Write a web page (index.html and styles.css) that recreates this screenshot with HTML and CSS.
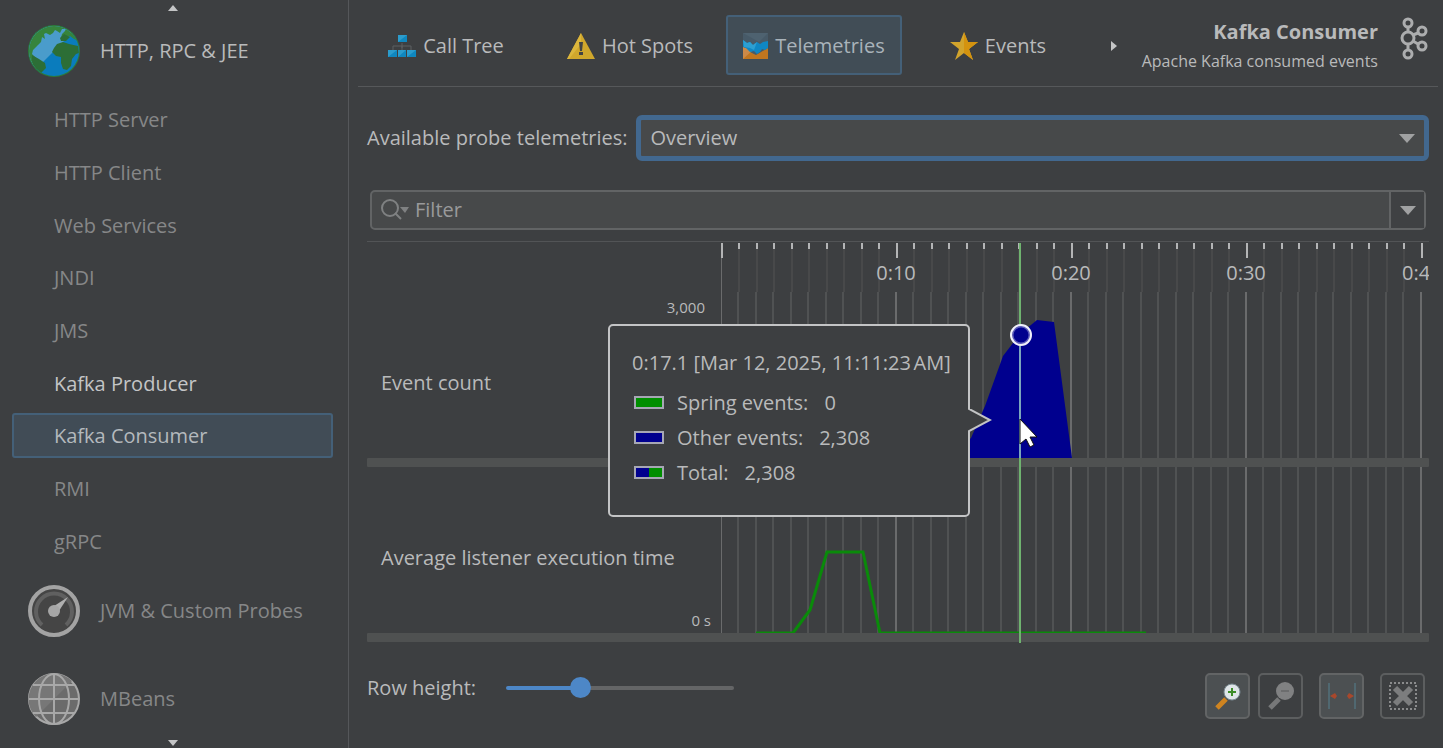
FILE: index.html
```html
<!DOCTYPE html>
<html lang="en">
<head>
    <meta charset="UTF-8" />
    <meta name="viewport" content="width=device-width, initial-scale=1.0" />
    <title>Kafka Consumer - Telemetries</title>
    <link rel="stylesheet" href="styles.css">
</head>
<body>
    <aside class="sidebar">
        <button class="scroll-button" aria-label="Scroll up">
            <svg width="12" height="6" viewBox="0 0 12 6"><path d="M1 6L6 0l5 6z" fill="#c4c5c6"/></svg>
        </button>

        <a href="#" class="category open">
            <svg width="54" height="54" viewBox="0 0 54 54">
                <defs>
                    <clipPath id="earthClip"><circle cx="27" cy="27" r="25"/></clipPath>
                </defs>
                <circle cx="27" cy="27" r="26" fill="#2b7d3b"/>
                <g clip-path="url(#earthClip)">
                    <rect width="54" height="54" fill="#0a7cbd"/>
                    <path d="M0 0h54L0 54z" fill="#4a9ccb"/>
                    <path d="M0 24V0h40l4 4-6 1-3 0-2 4-3-2-2-1-2 3-3 2-4-2-2 1 1 5-3-2-1 5-3 3-5 5-1 4 5 5 5 4-6 7C4 38 1 32 0 24z" fill="#36843c"/>
                    <path d="M5 31l7 4 6 4 1 5-4 4-1 5C8 48 4 40 5 31z" fill="#2c6e36"/>
                    <path d="M40 2l6 6 6 9-5-2-4-3-5 1-4 1 1-4 3-3z" fill="#36843c"/>
                    <path d="M27 24l3-4 6-2 6 2 9 2 1 7-3 1-4 5-1 7-4 4-4-1-2-6 0-6-5-1-4-4z" fill="#2c6e36"/>
                    <path d="M33 14l4-4 6 3-4 4-5 0z" fill="#2c6e36"/>
                </g>
            </svg>
            HTTP, RPC &amp; JEE
        </a>

        <ul class="probe-list">
            <li><a href="#">HTTP Server</a></li>
            <li><a href="#">HTTP Client</a></li>
            <li><a href="#">Web Services</a></li>
            <li><a href="#">JNDI</a></li>
            <li><a href="#">JMS</a></li>
            <li><a href="#" class="recorded">Kafka Producer</a></li>
            <li><a href="#" class="selected">Kafka Consumer</a></li>
            <li><a href="#">RMI</a></li>
            <li><a href="#">gRPC</a></li>
        </ul>

        <a href="#" class="category">
            <svg width="54" height="54" viewBox="0 0 54 54" fill="none">
                <circle cx="27" cy="27" r="24" fill="#454545" stroke="#a3a3a3" stroke-width="4"/>
                <path d="M15 41A18 18 0 1 1 39 41" stroke="#606060" stroke-width="4"/>
                <path d="M41 13L24 24l6 6z" fill="#b0b0b0"/>
                <circle cx="27" cy="27" r="6" fill="#a6a6a6"/>
            </svg>
            JVM &amp; Custom Probes
        </a>
        <a href="#" class="category">
            <svg width="54" height="54" viewBox="0 0 54 54" fill="none" stroke="#a8a8a8" stroke-width="2">
                <circle cx="27" cy="27" r="25" fill="#6b6b6b"/>
                <path d="M9 45A25 25 0 0 1 45 9z" fill="#777" stroke="none"/>
                <ellipse cx="27" cy="27" rx="15" ry="25"/>
                <path d="M27 2v50M2 27h50M6 13h42M6 41h42"/>
            </svg>
            MBeans
        </a>

        <button class="scroll-button bottom" aria-label="Scroll down">
            <svg width="12" height="6" viewBox="0 0 12 6"><path d="M1 0h10L6 6z" fill="#c4c5c6"/></svg>
        </button>
    </aside>

    <main>
        <header>
            <nav class="tabs">
                <button class="tab">
                    <svg width="28" height="28" viewBox="0 0 28 28">
                        <path d="M14 11v5M5 18v-4h18v4M14 14v4" fill="none" stroke="#5d6163"/>
                        <path d="M10 3h9v7h-9zM0 18h9v7H0zM10 18h8v7h-8zM19 18h9v7h-9z" fill="#0f87bf"/>
                        <path d="M10 3h9l-9 7zM0 18h9l-9 7zM10 18h8l-8 7zM19 18h9l-9 7z" fill="#2c9ccc"/>
                    </svg>
                    Call Tree
                </button>
                <button class="tab">
                    <svg width="28" height="28" viewBox="0 0 28 28">
                        <path d="M14 1l14 26H0z" fill="#d0a72c"/>
                        <path d="M14 1v11L2 27H0z" fill="#dcb63c"/>
                        <path d="M12 10h4l-1 9h-2zM12 20h4v3h-4z" fill="#424344"/>
                    </svg>
                    Hot Spots
                </button>
                <button class="tab selected">
                    <svg width="25" height="28" viewBox="1 0 25 28">
                        <rect x="1" y="1" width="25" height="26" fill="#475a68"/>
                        <path d="M1 1h25l-9 9z" fill="#4e6270"/>
                        <path d="M1 15l7 5 6 3 12-7v11H1z" fill="#c1761f"/>
                        <path d="M1 15l10 3-10 9z" fill="#cc8a48"/>
                        <path d="M1 8l4 3 3-1 3 3 4-3 3 2 3-2 5-1v7l-3 2-3-1-2 3-3 2-3-3-4 1-4-4-3-1z" fill="#0f87c4"/>
                        <path d="M1 8l4 3 3-1 3 3 4-3-3 8-4-2-6-1z" fill="#2c9fd2"/>
                    </svg>
                    Telemetries
                </button>
                <button class="tab">
                    <svg width="28" height="28" viewBox="0 0 28 28">
                        <path d="M14 0l4 10h10l-9 7 4 11-9-7-9 7 4-11-9-7h10z" fill="#d2a42c"/>
                        <path d="M14 0l4 10h10l-9 7 4 11-9-7z" fill="#d4930f"/>
                    </svg>
                    Events
                </button>
            </nav>
            <button class="more-tabs" aria-label="More tabs">
                <svg width="6" height="12" viewBox="0 0 6 12"><path d="M0 1l6 5-6 5z" fill="#c4c5c6"/></svg>
            </button>
            <div class="probe-title">
                <h1>Kafka Consumer</h1>
                <p>Apache Kafka consumed events</p>
            </div>
            <svg class="kafka-logo" width="28" height="44" viewBox="0 0 28 44" fill="none" stroke="#acadae" stroke-width="3">
                <circle cx="8" cy="7" r="4"/>
                <circle cx="8" cy="22" r="6"/>
                <circle cx="8" cy="38" r="4"/>
                <circle cx="22" cy="15" r="4"/>
                <circle cx="22" cy="30" r="4"/>
                <path d="M8 11v5M8 28v6M13 19l5-2M13 25l5 3"/>
            </svg>
        </header>

        <div class="content">
            <div class="picker">
                <label for="telemetry">Available probe telemetries:</label>
                <select id="telemetry">
                    <option>Overview</option>
                </select>
                <svg class="select-arrow" width="16" height="9" viewBox="0 0 16 9"><path d="M0 0h16L8 9z" fill="#a0a1a2"/></svg>
            </div>

            <div class="filter">
                <svg width="30" height="24" viewBox="0 0 30 24" fill="none" stroke="#7f8182" stroke-width="2">
                    <circle cx="10" cy="10" r="8"/>
                    <path d="M15 15l6 6"/>
                    <path d="M20 9h9l-4 6z" fill="#7f8182" stroke="none"/>
                </svg>
                <input type="text" placeholder="Filter" aria-label="Filter">
                <button aria-label="Filter history">
                    <svg width="16" height="9" viewBox="0 0 16 9"><path d="M0 0h16L8 9z" fill="#a0a1a2"/></svg>
                </button>
            </div>

            <section class="chart">
                <!-- one pattern tile covers 10 seconds -->
                <svg class="defs" width="0" height="0">
                    <defs>
                        <pattern id="ticks" width="175" height="50" patternUnits="userSpaceOnUse">
                            <path d="M0 1h2v15H0z" fill="#b4b5b6"/>
                            <path d="M17 1h2v6h-2zM35 1h2v6h-2zM52 1h2v6h-2zM70 1h2v6h-2zM87 1h2v6h-2zM105 1h2v6h-2zM122 1h2v6h-2zM140 1h2v6h-2zM157 1h2v6h-2z" fill="#b4b5b6"/>
                            <path d="M17 7h2v43h-2zM35 7h2v43h-2zM52 7h2v43h-2zM70 7h2v43h-2zM87 7h2v43h-2zM105 7h2v43h-2zM122 7h2v43h-2zM140 7h2v43h-2zM157 7h2v43h-2z" fill="#48494a"/>
                        </pattern>
                        <pattern id="grid" x="-1" width="175" height="166" patternUnits="userSpaceOnUse">
                            <path d="M0 0h2v166H0z" fill="#6a6b6c"/>
                            <path d="M17 0h2v166h-2zM35 0h2v166h-2zM52 0h2v166h-2zM70 0h2v166h-2zM87 0h2v166h-2zM105 0h2v166h-2zM122 0h2v166h-2zM140 0h2v166h-2zM157 0h2v166h-2z" fill="#505253"/>
                        </pattern>
                    </defs>
                </svg>

                <div class="time-axis">
                    <svg class="plot">
                        <rect width="100%" height="50" fill="url(#ticks)"/>
                        <path d="M0 16h1v34H0z" fill="#6a6b6c"/>
                        <text x="175" y="38" text-anchor="middle">0:10</text>
                        <text x="350" y="38" text-anchor="middle">0:20</text>
                        <text x="525" y="38" text-anchor="middle">0:30</text>
                        <text x="681" y="38">0:4</text>
                    </svg>
                </div>

                <div class="chart-row">
                    <div class="row-label">
                        <h2>Event count</h2>
                        <span class="axis-max">3,000</span>
                    </div>
                    <svg class="plot">
                        <rect width="100%" height="166" fill="url(#grid)"/>
                        <path d="M228 166L250 146 264 114 282 64 299 42 316 28 333 30 351 166z" fill="#00008e"/>
                    </svg>
                </div>
                <div class="divider"></div>

                <div class="chart-row">
                    <div class="row-label">
                        <h2>Average listener execution time</h2>
                        <span class="axis-min">0 s</span>
                    </div>
                    <svg class="plot">
                        <rect width="100%" height="166" fill="url(#grid)"/>
                        <path d="M35 166H72L89 143 106 85H142L159 166H425" fill="none" stroke="#0a8a0a" stroke-width="3"/>
                    </svg>
                </div>
                <div class="divider"></div>

                <!-- time cursor, value marker and mouse pointer -->
                <svg class="cursor" width="40" height="401" viewBox="0 0 40 401">
                    <path d="M19 1h2v400h-2z" fill="#6fb36f"/>
                    <path d="M19 93h2v123h-2z" fill="#7ba6bd"/>
                    <circle cx="21" cy="93" r="9" fill="#00008e" stroke="#5a5ab8" stroke-width="3"/>
                    <circle cx="21" cy="93" r="10" fill="none" stroke="#f0f0fa" stroke-width="2"/>
                    <path d="M20 177v25l6-5 4 8 4-2-4-8h7z" fill="#fff" stroke="#111" stroke-width="1"/>
                </svg>

                <div class="tooltip">
                    <p class="time">0:17.1 [Mar 12, 2025, 11:11:23&#8239;AM]</p>
                    <dl>
                        <div><i class="swatch spring"></i><dt>Spring events:</dt><dd>0</dd></div>
                        <div><i class="swatch other"></i><dt>Other events:</dt><dd>2,308</dd></div>
                        <div><i class="swatch total"></i><dt>Total:</dt><dd>2,308</dd></div>
                    </dl>
                    <svg class="pointer" width="24" height="24" viewBox="0 0 24 24">
                        <path d="M0 1h2l20 11L2 23H0z" fill="#3d3f41"/>
                        <path d="M1 0v1l21 11L1 23v1" fill="none" stroke="#c3c4c5" stroke-width="2"/>
                    </svg>
                </div>
            </section>

            <footer>
                <label for="rowHeight">Row height:</label>
                <input type="range" id="rowHeight" min="0" max="100" value="31">
                <div class="tools">
                    <button aria-label="Zoom in">
                        <svg width="28" height="28" viewBox="0 0 28 28">
                            <path d="M3 26l9-9" stroke="#cf8420" stroke-width="5"/>
                            <circle cx="18" cy="10" r="8" fill="#dfe5e8" stroke="#7b8b93"/>
                            <path d="M18 6v8M14 10h8" stroke="#3c8c28" stroke-width="2"/>
                        </svg>
                    </button>
                    <button disabled aria-label="Zoom out">
                        <svg width="28" height="28" viewBox="0 0 28 28">
                            <path d="M3 26l9-9" stroke="#777879" stroke-width="5"/>
                            <circle cx="18" cy="9" r="9" fill="#808182"/>
                            <path d="M14 9h8" stroke="#6c6d6e" stroke-width="2"/>
                        </svg>
                    </button>
                    <button class="spaced" aria-label="Fit window">
                        <svg width="28" height="28" viewBox="0 0 28 28">
                            <path d="M1 1v26M27 1v26" stroke="#55808f" stroke-width="1"/>
                            <path d="M2 14l5-3 2 3-2 3zM26 14l-5-3-2 3 2 3z" fill="#a8482c"/>
                        </svg>
                    </button>
                    <button disabled class="spaced" aria-label="Remove selection">
                        <svg width="28" height="28" viewBox="0 0 28 28" fill="none">
                            <rect x="1" y="1" width="26" height="26" stroke="#8a8b8c" stroke-width="2" stroke-dasharray="2 2"/>
                            <path d="M6 6l16 16M22 6L6 22" stroke="#7c7d7e" stroke-width="6"/>
                        </svg>
                    </button>
                </div>
            </footer>
        </div>
    </main>
</body>
</html>
```
FILE: styles.css
```css
/* Basic reset */
* {
    margin: 0;
    padding: 0;
    box-sizing: border-box;
}

body {
    display: flex;
    min-height: 100vh;
    background-color: #3d3f41;
    color: #b9babb;
    font-family: "Open Sans", "Noto Sans", sans-serif;
    font-size: 20px;
    line-height: 30px;
}

a {
    color: inherit;
    text-decoration: none;
}

button,
input,
select {
    font: inherit;
    color: inherit;
    background: none;
    border: none;
}

svg {
    display: block;
    flex-shrink: 0;
}

/* Sidebar */
.sidebar {
    width: 349px;
    flex-shrink: 0;
    display: flex;
    flex-direction: column;
    border-right: 1px solid #55575a;
}

.scroll-button {
    height: 16px;
    padding-right: 3px;
    display: flex;
    justify-content: center;
    align-items: center;
}

.scroll-button.bottom {
    height: 14px;
    padding-top: 4px;
}

.category {
    height: 70px;
    padding-left: 27px;
    display: flex;
    align-items: center;
    gap: 19px;
    color: #868788;
}

.category.open {
    color: #b9babb;
}

.category + .category {
    margin-top: 18px;
}

.probe-list {
    flex: 1;
    margin: 11px 15px 13px 12px;
    display: flex;
    flex-direction: column;
    gap: 8px;
    list-style: none;
}

.probe-list li {
    flex: 1;
    display: flex;
}

.probe-list a {
    flex: 1;
    display: flex;
    align-items: center;
    padding: 2px 0 0 40px;
    border: 2px solid transparent;
    border-radius: 3px;
    color: #868788;
}

.probe-list .recorded {
    color: #c4c5c6;
}

.probe-list .selected {
    background-color: #414c56;
    border-color: #446078;
    color: #b4b9bd;
}

/* Main area */
main {
    flex: 1;
    min-width: 0;
}

header {
    height: 87px;
    margin: 0 5px 0 9px;
    display: flex;
    align-items: center;
    border-bottom: 1px solid #56585a;
}

.tabs {
    display: flex;
    gap: 8px;
    padding-top: 4px;
}

.tab {
    width: 176px;
    height: 60px;
    padding-top: 2px;
    display: flex;
    justify-content: center;
    align-items: center;
    gap: 7px;
    border: 2px solid transparent;
    border-radius: 3px;
}

.tab.selected {
    background-color: #414d56;
    border-color: #446078;
    color: #a9b3ba;
}

.more-tabs {
    margin-left: 25px;
    padding-top: 5px;
}

.probe-title {
    flex: 1;
    text-align: right;
    white-space: nowrap;
    padding-top: 6px;
}

.probe-title h1 {
    font-size: 20px;
    line-height: 30px;
}

.probe-title p {
    font-size: 16px;
    line-height: 28px;
}

.kafka-logo {
    margin: 0 10px 10px 22px;
}

.content {
    margin: 28px 14px 28px 18px;
}

/* Telemetry picker */
.picker {
    position: relative;
    display: flex;
    align-items: center;
    gap: 8px;
}

.picker select {
    flex: 1;
    height: 46px;
    padding-left: 10px;
    appearance: none;
    background-color: #47494a;
    border: 5px solid #42688f;
    border-radius: 6px;
    outline: none;
}

.select-arrow {
    position: absolute;
    right: 14px;
    pointer-events: none;
}

/* Filter box */
.filter {
    height: 40px;
    margin: 29px 3px 11px 3px;
    display: flex;
    align-items: center;
    background-color: #47494a;
    border: 2px solid #626465;
    border-radius: 5px;
}

.filter > svg {
    margin-left: 8px;
}

.filter input {
    flex: 1;
    min-width: 0;
    padding-left: 5px;
    outline: none;
}

.filter input::placeholder {
    color: #999a9b;
    opacity: 1;
}

.filter button {
    align-self: stretch;
    width: 35px;
    display: flex;
    justify-content: center;
    align-items: center;
    background-color: #3f4143;
    border-left: 2px solid #626465;
}

/* Chart */
.chart {
    position: relative;
    border-top: 1px solid #525456;
}

.defs {
    position: absolute;
}

.time-axis {
    height: 50px;
    padding-left: 354px;
}

.plot {
    width: 100%;
    height: 100%;
    overflow: hidden;
    fill: #b9babb;
}

.chart-row {
    height: 166px;
    display: grid;
    grid-template-columns: 354px minmax(0, 1fr);
}

.row-label {
    position: relative;
    display: flex;
    align-items: center;
    padding: 16px 0 0 14px;
}

.row-label h2 {
    font-size: 20px;
    font-weight: normal;
}

.axis-max,
.axis-min {
    position: absolute;
    font-size: 15px;
    line-height: 20px;
}

.axis-max {
    top: 5px;
    right: 16px;
}

.axis-min {
    bottom: 3px;
    right: 10px;
}

.divider {
    height: 9px;
    background-color: #4f5151;
    border-radius: 1px;
}

.cursor {
    position: absolute;
    top: 0;
    left: 633px;
}

/* Tooltip */
.tooltip {
    position: absolute;
    top: 82px;
    left: 241px;
    width: 362px;
    height: 193px;
    padding: 22px;
    background-color: #3d3f41;
    border: 2px solid #c3c4c5;
    border-radius: 5px;
    white-space: nowrap;
}

.tooltip .time {
    margin-bottom: 7px;
}

.tooltip dl div {
    height: 35px;
    display: flex;
    align-items: center;
    padding-left: 2px;
}

.tooltip dd {
    margin-left: 16px;
}

.swatch {
    width: 30px;
    height: 13px;
    margin-right: 13px;
    border: 2px solid #a6a7b4;
}

.swatch.spring {
    background-color: #008e00;
}

.swatch.other {
    background-color: #00008e;
}

.swatch.total {
    background: linear-gradient(to right, #00008e 50%, #008e00 50%);
}

.pointer {
    position: absolute;
    top: 82px;
    left: 358px;
}

/* Bottom bar */
footer {
    margin-top: 31px;
    display: flex;
    align-items: flex-start;
}

footer input {
    width: 228px;
    height: 30px;
    margin-left: 30px;
    appearance: none;
}

footer input::-webkit-slider-runnable-track {
    height: 4px;
    border-radius: 2px;
    background: linear-gradient(to right, #4d87c7 33%, #646566 33%);
}

footer input::-webkit-slider-thumb {
    appearance: none;
    width: 21px;
    height: 21px;
    margin-top: -9px;
    border-radius: 50%;
    background-color: #4d87c7;
}

.tools {
    margin-left: auto;
    padding-right: 4px;
    display: flex;
    gap: 8px;
}

.tools button {
    width: 45px;
    height: 46px;
    display: flex;
    justify-content: center;
    align-items: center;
    background-color: #4c5052;
    border: 2px solid #626465;
    border-radius: 5px;
}

.tools button:disabled {
    background-color: transparent;
    border-color: #5c5e5f;
}

.tools .spaced {
    margin-left: 8px;
}
```
